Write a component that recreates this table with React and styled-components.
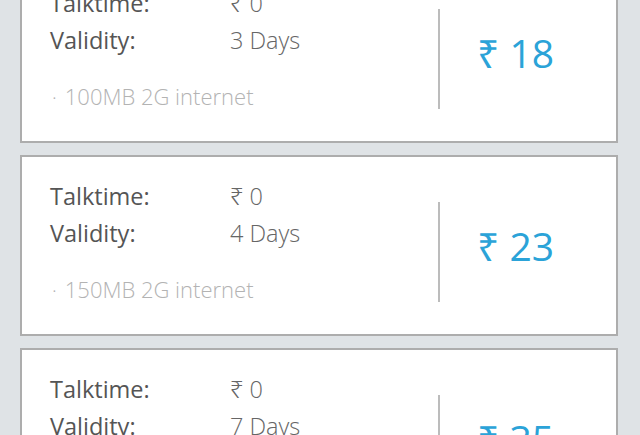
import React from "react";
import styled, { createGlobalStyle } from "styled-components";

const Global = createGlobalStyle`
  html, body { margin: 0; padding: 0; background: #dfe3e6; overflow: hidden; }
  body { font-family: "Open Sans", "Noto Sans", sans-serif; }
`;

const List = styled.div`
  display: flex;
  flex-direction: column;
  gap: 12px;
  padding: 0 22px 0 20px;
  margin-top: -38px;
`;

const Card = styled.div`
  display: flex;
  align-items: flex-start;
  background: #ffffff;
  border: 2px solid #adadad;
  height: 177px;
  box-sizing: content-box;
`;

const Info = styled.div`
  flex: 0 0 416px;
  padding: 21px 0 0 28px;
  box-sizing: border-box;
`;

const Row = styled.div`
  display: flex;
  font-size: 23.5px;
  line-height: 37px;
`;

const Label = styled.span`
  flex: 0 0 180px;
  color: #555555;
  font-weight: 400;
`;

const Value = styled.span`
  color: #666666;
  font-weight: 300;
`;

const Benefit = styled.div`
  display: flex;
  align-items: baseline;
  margin-top: 24px;
  font-size: 22px;
  line-height: 27px;
  font-weight: 300;
  color: #b3b3b3;
  white-space: nowrap;
`;

const Bullet = styled.span`
  margin: 0 8px 0 2px;
  font-size: 20px;
`;

const PriceBox = styled.div`
  margin-top: 45px;
  height: 100px;
  border-left: 2px solid #bcbcbc;
  display: flex;
  align-items: center;
  padding: 0 0 14px 37px;
  box-sizing: border-box;
`;

const Price = styled.span`
  font-size: 39px;
  font-weight: 400;
  color: #2ba3d8;
  line-height: 1;
`;

const plans = [
  { talk: "₹ 0", validity: "3 Days", benefit: "100MB 2G internet", price: 18 },
  { talk: "₹ 0", validity: "4 Days", benefit: "150MB 2G internet", price: 23 },
  { talk: "₹ 0", validity: "7 Days", benefit: "250MB 2G internet", price: 35 },
];

export default function App() {
  return (
    <>
      <Global />
      <List>
        {plans.map((p) => (
          <Card key={p.price}>
            <Info>
              <Row>
                <Label>Talktime:</Label>
                <Value>{p.talk}</Value>
              </Row>
              <Row>
                <Label>Validity:</Label>
                <Value>{p.validity}</Value>
              </Row>
              <Benefit>
                <Bullet>·</Bullet>
                {p.benefit}
              </Benefit>
            </Info>
            <PriceBox>
              <Price>₹ {p.price}</Price>
            </PriceBox>
          </Card>
        ))}
      </List>
    </>
  );
}
